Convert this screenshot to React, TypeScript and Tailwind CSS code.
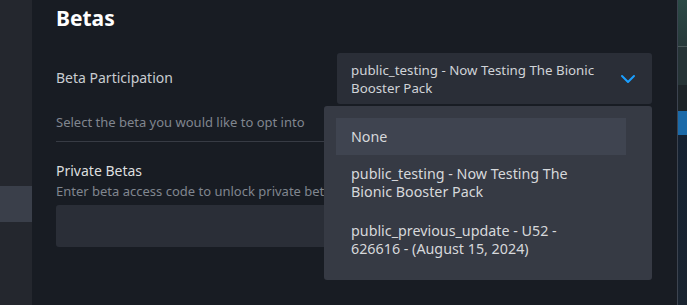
import React from 'react';

const font = { fontFamily: '"Noto Sans", "Open Sans", Arial, sans-serif' };

const options = [
  'None',
  'public_testing - Now Testing The Bionic Booster Pack',
  'public_previous_update - U52 - 626616 - (August 15, 2024)',
];

function Chevron() {
  return (
    <svg width="16" height="10" viewBox="0 0 16 10" fill="none" className="shrink-0">
      <path d="M2 2 L8 8 L14 2" stroke="#1a9fff" strokeWidth="2" strokeLinecap="round" strokeLinejoin="round" />
    </svg>
  );
}

export default function App() {
  return (
    <div className="flex w-[687px] h-[305px] overflow-hidden bg-[#181c23] text-[#dcdedf]" style={font}>
      {/* left nav rail */}
      <div className="w-[32px] shrink-0 bg-[#24272e] flex flex-col">
        <div className="h-[186px]" />
        <div className="h-[36px] bg-[#3a3f4a]" />
      </div>

      {/* main settings area */}
      <div className="relative flex-1 pl-6 pr-[25px]">
        <h1 className="text-[21px] font-bold text-white leading-none mt-[8px]">Betas</h1>

        <div className="flex items-start justify-between mt-[24px]">
          <div className="text-[14px] text-[#c9ccd1] pt-[15px] leading-5">Beta Participation</div>
          <div className="w-[315px] h-[51px] rounded-[3px] bg-[#2a2e37] flex items-center justify-between pl-[14px] pr-[16px]">
            <span className="max-w-[256px] text-[13.3px] leading-[18px] text-[#d0d3d7]">
              public_testing - Now Testing The Bionic Booster Pack
            </span>
            <Chevron />
          </div>
        </div>

        <div className="text-[13px] text-[#80868f] mt-[8px] leading-5">Select the beta you would like to opt into</div>
        <div className="h-px bg-[#373b44] mt-[9px]" />

        <div className="text-[14px] text-[#dcdedf] mt-[19px] leading-5">Private Betas</div>
        <div className="text-[13px] text-[#80868f] leading-5">Enter beta access code to unlock private betas</div>
        <div className="h-[42px] rounded-[3px] bg-[#2a2e37] mt-[4px]" />

        {/* open dropdown menu */}
        <div className="absolute left-[292px] top-[106px] w-[328px] h-[174px] rounded-[3px] bg-[#363a44] pt-3 px-3">
          {options.map((o, i) => (
            <div
              key={i}
              className={`w-[290px] px-[15px] text-[14.3px] leading-[18px] text-[#d6d8db] ${
                i === 0 ? 'bg-[#3f4450] h-[37px] flex items-center' : 'pt-[10px] pb-[11px]'
              }`}
            >
              <span className="block max-w-[240px]">{o}</span>
            </div>
          ))}
        </div>
      </div>

      {/* right edge strip */}
      <div className="w-[10px] shrink-0 border-l border-[#3d4450] flex flex-col">
        <div className="h-[46px] bg-gradient-to-b from-[#2b4a46] to-[#27393a]" />
        <div className="h-px bg-[#4b5a5a]" />
        <div className="h-[38px] bg-[#263436]" />
        <div className="h-[26px] bg-[#1d2428]" />
        <div className="h-[24px] bg-[#1b6aa8]" />
        <div className="flex-1 bg-gradient-to-b from-[#142131] to-[#1a2430]" />
      </div>
    </div>
  );
}
